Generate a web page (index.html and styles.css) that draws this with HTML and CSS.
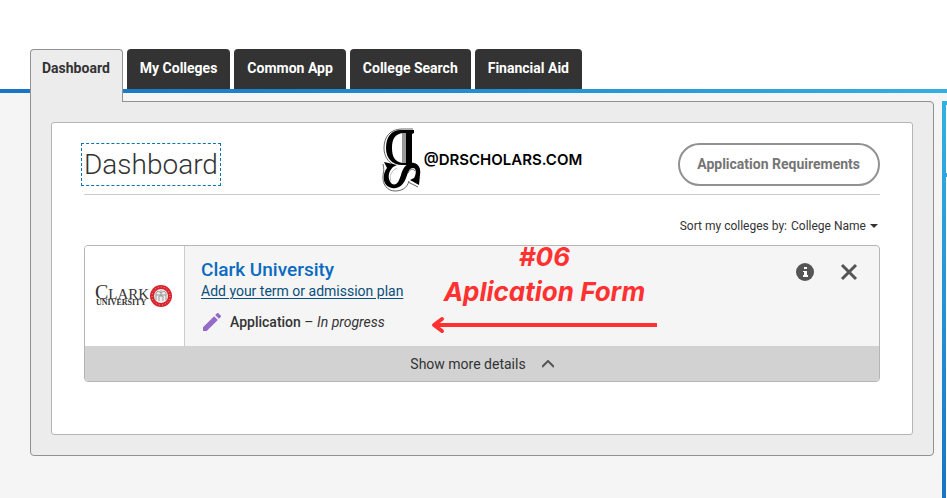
FILE: index.html
```html
<!DOCTYPE html>
<html lang="en">
<head>
    <meta charset="UTF-8">
    <meta name="viewport" content="width=device-width, initial-scale=1.0">
    <title>Dashboard</title>
    <link rel="stylesheet" href="styles.css">
</head>
<body>
    <nav class="tabs">
        <a class="tab active" href="#dashboard">Dashboard</a>
        <a class="tab" href="#colleges">My Colleges</a>
        <a class="tab" href="#common-app">Common App</a>
        <a class="tab" href="#search">College Search</a>
        <a class="tab" href="#aid">Financial Aid</a>
    </nav>

    <div class="layout">
        <main class="panel">
            <div class="content">
                <header class="page-head">
                    <h1 class="page-title">Dashboard</h1>

                    <div class="brand">
                        <svg class="brand-logo" width="40" height="64" viewBox="0 0 40 64" aria-hidden="true">
                            <!-- reversed D -->
                            <path d="M31 1H20C8 1 2 9 2 20c0 8 4 14 10 17" fill="none" stroke="#666" stroke-width="1"/>
                            <path d="M32 2H19C9 2 4 9 4 20c0 10 6 17 16 17h10V6l2-1zM21 5v30c-8-1-11-6-11-15 0-9 3-14 11-15z" fill="#000" fill-rule="evenodd"/>
                            <path d="M20 5h4v30h-4z" fill="#999"/>
                            <!-- reversed S -->
                            <path d="M2 34l13 3-4 2c-5 5-6 12-1 17 5 2 7-3 9-9 2-8 7-13 13-12 5 1 7 6 6 12l-1 10-9-5 4-2c3-5 2-10-1-10-4 0-5 5-7 10-3 8-8 11-14 10C0 58 0 46 5 40z" fill="#000"/>
                            <path d="M1 36c1 5 1 6 0 11-1 9 4 16 12 16 7 0 12-3 14-10M26 45c2-4 5-5 7-2M26 54l10 5" fill="none" stroke="#666" stroke-width="1"/>
                            <path d="M15 40c-6 3-8 8-6 13" fill="none" stroke="#bbb" stroke-width="1"/>
                        </svg>
                        <span class="brand-name">@DRSCHOLARS.COM</span>
                    </div>

                    <button class="btn" type="button">Application Requirements</button>
                </header>

                <div class="sort">
                    <label for="sortBy">Sort my colleges by:</label>
                    <select id="sortBy" class="sort-select">
                        <option>College Name</option>
                    </select>
                    <svg width="8" height="4" viewBox="0 0 8 4" aria-hidden="true"><path d="M0 0h8L4 4z" fill="#333"/></svg>
                </div>

                <section class="card">
                    <div class="card-body">
                        <div class="card-logo">
                            <svg width="80" height="36" viewBox="0 0 80 36" role="img" aria-label="Clark University">
                                <text class="clark-name" x="0" y="21"><tspan class="clark-cap">C</tspan>LARK</text>
                                <text class="clark-sub" x="1" y="27">UNIVERSITY</text>
                                <circle cx="66" cy="18" r="11" fill="#d8232f"/>
                                <circle cx="66" cy="18" r="9" fill="none" stroke="#f3a3a8" stroke-width="1" stroke-dasharray="1 2"/>
                                <circle cx="66" cy="18" r="7" fill="#eee"/>
                                <path d="M61 22v-7l2-2 3 2 3-2 2 2v7M61 17h10M64 23v-5h4v5M66 12v6" fill="none" stroke="#999" stroke-width="1"/>
                            </svg>
                        </div>

                        <div class="info">
                            <h2 class="college">Clark University</h2>
                            <a class="plan" href="#plan">Add your term or admission plan</a>
                            <div class="status">
                                <svg width="18" height="18" viewBox="0 0 18 18" aria-hidden="true">
                                    <path d="M0 14.3V18h3.7L14.8 6.9l-3.7-3.7zM17.7 4a1 1 0 0 0 0-1.4L15.4.3a1 1 0 0 0-1.4 0l-1.8 1.8 3.7 3.7z" fill="#946cc8"/>
                                </svg>
                                <span><strong>Application</strong> – <em>In progress</em></span>
                            </div>
                        </div>

                        <div class="note">
                            <span>#06</span>
                            <span>Aplication Form</span>
                            <svg width="226" height="18" viewBox="0 0 226 18" aria-hidden="true">
                                <path d="M226 9H4" stroke="#ff3131" stroke-width="4"/>
                                <path d="M11 3L3 9l8 6" fill="none" stroke="#ff3131" stroke-width="4" stroke-linecap="round" stroke-linejoin="round"/>
                            </svg>
                        </div>

                        <div class="actions">
                            <button class="icon-btn" type="button" aria-label="Information">
                                <svg width="18" height="18" viewBox="0 0 18 18">
                                    <circle cx="9" cy="9" r="9" fill="#555"/>
                                    <path d="M8 4h3v2H8zM7 8h4v4h1v2H7v-2h1V9H7z" fill="#fff"/>
                                </svg>
                            </button>
                            <button class="icon-btn" type="button" aria-label="Remove">
                                <svg width="18" height="18" viewBox="0 0 18 18"><path d="M2 2l14 14M16 2L2 16" stroke="#555" stroke-width="3"/></svg>
                            </button>
                        </div>
                    </div>

                    <button class="more" type="button">
                        Show more details
                        <svg width="12" height="8" viewBox="0 0 12 8" aria-hidden="true"><path d="M0 7l6-6 6 6" fill="none" stroke="#555" stroke-width="2"/></svg>
                    </button>
                </section>
            </div>
        </main>

        <aside class="side">
            <div class="side-head"></div>
        </aside>
    </div>
</body>
</html>
```
FILE: styles.css
```css
:root {
    --text: #333;
    --page: #f5f5f5;
    --panel: #ececec;
    --line: #b5b5b5;
    --red: #ff3131;
}

* {
    box-sizing: border-box;
}

body {
    margin: 0;
    min-height: 100vh;
    display: flex;
    flex-direction: column;
    background: var(--page);
    color: var(--text);
    font-family: Roboto, Arial, sans-serif;
    font-size: 14px;
    overflow-x: hidden;
}

button, select {
    font: inherit;
    color: inherit;
}

/* top tabs */
.tabs {
    display: flex;
    align-items: flex-start;
    gap: 4px;
    height: 93px;
    padding: 49px 30px 0;
    background: white;
    border-bottom: 4px solid;
    border-image: linear-gradient(to right, #1775c4, #2391d2 55%, #34b0e0) 1;
}

.tab {
    height: 40px;
    padding: 0 13px;
    line-height: 38px;
    border-radius: 4px 4px 0 0;
    background: #333;
    color: white;
    font-weight: 700;
    text-decoration: none;
    white-space: nowrap;
}

/* runs down into the panel */
.tab.active {
    position: relative;
    z-index: 1;
    height: 53px;
    padding: 0 12px 0 11px;
    line-height: 36px;
    background: var(--panel);
    color: var(--text);
    border: 1px solid #919191;
    border-bottom: none;
}

.layout {
    flex: 1;
    display: grid;
    grid-template-columns: 1fr 5px;
    align-items: start;
    gap: 8px;
    padding: 8px 0 0 30px;
}

.panel {
    padding: 20px;
    background: var(--panel);
    border: 1px solid #919191;
    border-radius: 0 4px 4px 4px;
}

.content {
    padding: 20px 32px 52px;
    background: white;
    border: 1px solid var(--line);
    border-radius: 3px;
}

/* title row */
.page-head {
    display: grid;
    grid-template-columns: 1fr auto 1fr;
    align-items: center;
    height: 52px;
    border-bottom: 1px solid #ccc;
}

.page-title {
    justify-self: start;
    margin: 0 0 8px -3px;
    padding: 0 2px;
    line-height: 41px;
    font-size: 28px;
    font-weight: 300;
    border: 1px dashed #0b75b0;
}

.brand {
    display: flex;
    align-items: center;
    gap: 2px;
    margin: -18px 0 0;
    color: black;
    font-family: Inter, sans-serif;
    font-size: 15px;
    font-weight: 600;
}

.btn {
    justify-self: end;
    height: 43px;
    margin-bottom: 8px;
    padding: 0 18px 2px 17px;
    background: white;
    border: 2px solid #919191;
    border-radius: 22px;
    color: #757575;
    font-weight: 700;
    white-space: nowrap;
    cursor: pointer;
}

.sort {
    display: flex;
    justify-content: flex-end;
    align-items: center;
    gap: 4px;
    height: 50px;
    padding: 12px 2px 0 0;
    font-size: 12px;
}

.sort-select {
    appearance: none;
    padding: 0;
    border: none;
    background: none;
}

/* college card */
.card {
    overflow: hidden;
    background: var(--page);
    border: 1px solid var(--line);
    border-radius: 4px;
}

.card-body {
    display: flex;
    height: 100px;
}

.card-logo {
    flex: none;
    display: flex;
    align-items: center;
    width: 100px;
    padding-left: 10px;
    background: white;
    border-right: 1px solid #ccc;
}

.clark-name,
.clark-sub {
    font-family: "Liberation Serif", serif;
    fill: #333;
}

.clark-name {
    font-size: 15px;
}

.clark-cap {
    font-size: 20px;
}

.clark-sub {
    font-size: 8px;
    font-weight: 700;
}

.info {
    padding: 12px 0 0 16px;
    white-space: nowrap;
}

.college {
    margin: 0;
    line-height: 23px;
    font-size: 19px;
    font-weight: 500;
    color: #0b6bbf;
}

.plan {
    display: block;
    line-height: 20px;
    color: #0a4f7a;
    text-underline-offset: 2px;
}

.status {
    display: flex;
    align-items: center;
    gap: 9px;
    margin-top: 12px;
    padding-left: 2px;
}

.status strong {
    font-weight: 500;
}

/* red callout with the arrow */
.note {
    display: flex;
    flex-direction: column;
    align-items: center;
    gap: 13px;
    margin-left: 28px;
    color: var(--red);
    font-family: Inter, sans-serif;
    font-size: 26px;
    font-weight: 700;
    font-style: italic;
    line-height: 22px;
    white-space: nowrap;
}

.actions {
    display: flex;
    gap: 26px;
    margin-left: auto;
    padding: 17px 21px 0 0;
}

.icon-btn {
    height: 18px;
    padding: 0;
    border: none;
    background: none;
    cursor: pointer;
}

.more {
    display: flex;
    justify-content: center;
    align-items: center;
    gap: 16px;
    width: 100%;
    height: 35px;
    border: none;
    background: #d2d2d2;
    cursor: pointer;
}

/* right column, cut off by the window edge */
.side {
    align-self: stretch;
    border-left: 4px solid;
    border-top: 4px solid;
    border-image: linear-gradient(#34b0e0, #1775c4) 1;
    background: white;
}

.side-head {
    height: 72px;
    border-bottom: 4px solid #2ea6db;
}
```
